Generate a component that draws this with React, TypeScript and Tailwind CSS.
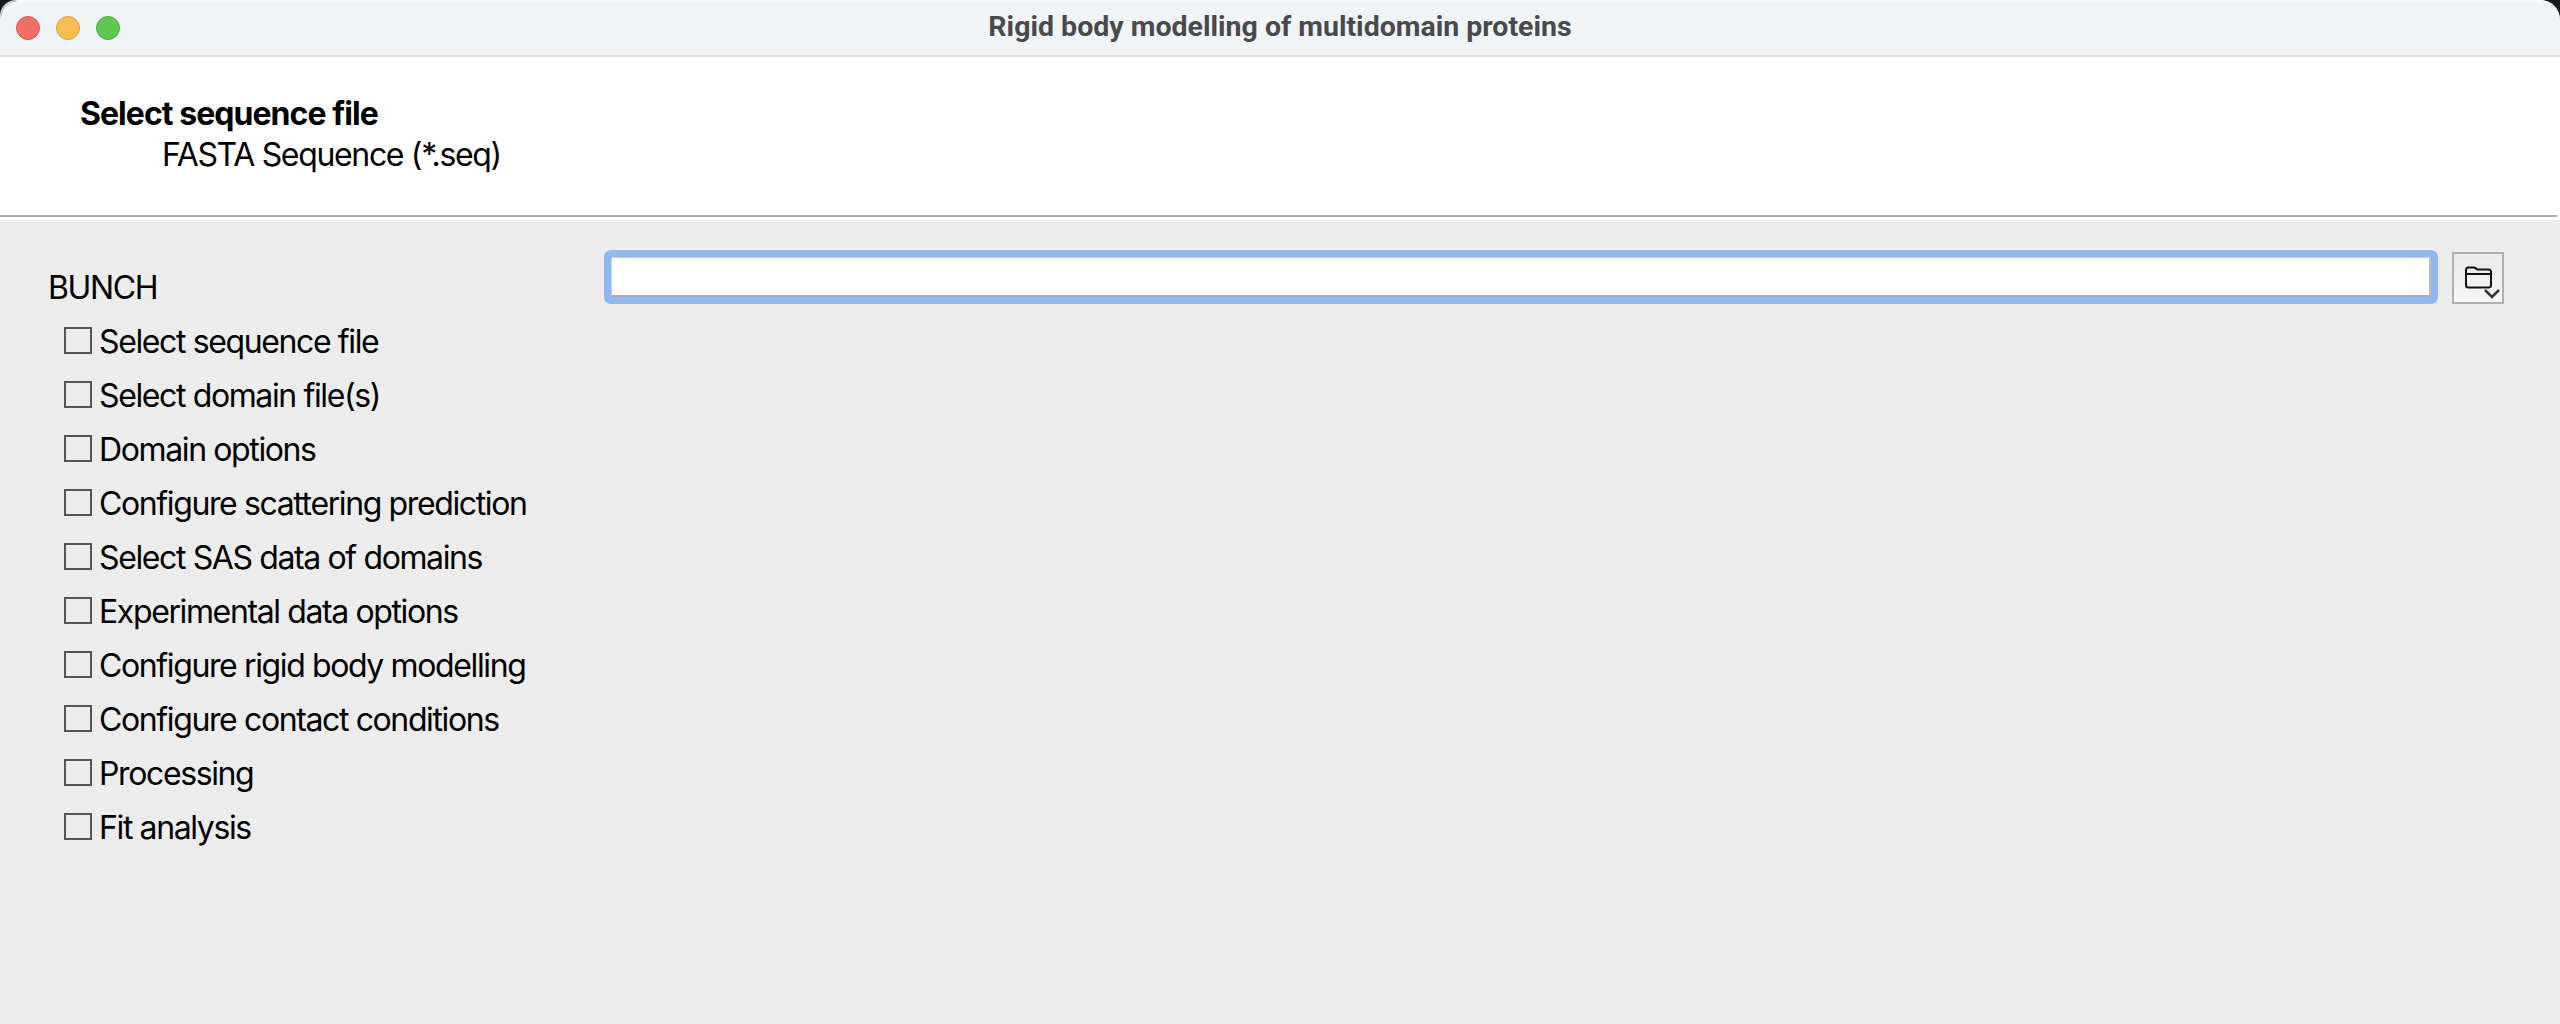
const items = [
  "Select sequence file",
  "Select domain file(s)",
  "Domain options",
  "Configure scattering prediction",
  "Select SAS data of domains",
  "Experimental data options",
  "Configure rigid body modelling",
  "Configure contact conditions",
  "Processing",
  "Fit analysis",
];

export default function App() {
  return (
    <div className="relative h-[1024px] w-[2560px] overflow-hidden bg-[#1a1a1a] font-['Inter','Liberation_Sans',sans-serif] text-black">
      <div className="flex h-full flex-col overflow-hidden rounded-t-[20px] bg-[#ececec]">
        <header className="relative flex h-[57px] shrink-0 items-center justify-center border-b-2 border-t-2 border-b-[#dcdee0] border-t-[#f8f9fa] bg-[#f1f4f7] pb-[2px]">
          <div className="absolute left-[16px] top-[14px] flex gap-[16px]">
            <span className="size-[24px] rounded-full border border-[#d9544c] bg-[#f26d62]" />
            <span className="size-[24px] rounded-full border border-[#dca23c] bg-[#f6bf50]" />
            <span className="size-[24px] rounded-full border border-[#4caa3e] bg-[#5fc553]" />
          </div>
          <h1 className="font-['Roboto',sans-serif] text-[28.5px] font-bold text-[#4a4a4c]">
            Rigid body modelling of multidomain proteins
          </h1>
        </header>
        <section className="h-[158px] shrink-0 bg-white pl-[80px] pt-[37px]">
          <div className="text-[32px] font-bold leading-[40px] tracking-[-0.95px]">Select sequence file</div>
          <div className="pl-[82px] pt-[1px] text-[32px] leading-[40px] tracking-[-1.33px]">FASTA Sequence (*.seq)</div>
        </section>
        <div className="h-[5px] shrink-0 bg-white pr-[3px]">
          <div className="h-[2px] bg-[#a9a9a9]" />
        </div>
        <main className="flex flex-1 pl-[48px]">
          <nav className="w-[556px] shrink-0 pt-[41px] text-[32px] leading-[54px] tracking-[-1.38px]">
            <div>BUNCH</div>
            {items.map((t) => (
              <label key={t} className="flex h-[54px] items-center pl-[16px]">
                <span className="mb-[4px] mr-[7px] h-[27px] w-[28px] shrink-0 border-2 border-[#555555] bg-[#ececec]" />
                {t}
              </label>
            ))}
          </nav>
          <div className="flex items-start gap-[14px] pt-[30px]">
            <div className="h-[54px] w-[1834px] rounded-[7px] border-[7px] border-[#90b9ef]">
              <input
                type="text"
                className="block size-full border-b-2 border-l border-r-2 border-t border-b-[#aaaaaa] border-l-[#cccccc] border-r-[#bbbbbb] border-t-[#cccccc] bg-white outline-none"
              />
            </div>
            <button className="mt-[2px] size-[52px] border-2 border-[#b0b0b0] bg-gradient-to-b from-[#e9e9e9] to-[#f6f6f6]">
              <svg width="48" height="48" viewBox="0 0 48 48" fill="none" className="block">
                <path
                  d="M12 20V16c0-1.500 1-2.500 2.500-2.500H20c1.500 0 2 .5 3 2H34.500c1.500 0 2.500 1 2.500 2.500V31c0 1.500-1 2.500-2.500 2.500H14.500C13 33.500 12 32.500 12 31V20H37"
                  stroke="#111111"
                  strokeWidth="2"
                  strokeLinejoin="round"
                />
                <path d="M31 36l7 7 7-7" stroke="#333333" strokeWidth="2.500" />
              </svg>
            </button>
          </div>
        </main>
      </div>
      <svg width="24" height="24" viewBox="0 0 24 24" fill="none" className="absolute left-0 top-0">
        <path d="M1 16C1 8 7 1 16 1" stroke="#c8c8c8" strokeWidth="2" />
      </svg>
    </div>
  );
}
